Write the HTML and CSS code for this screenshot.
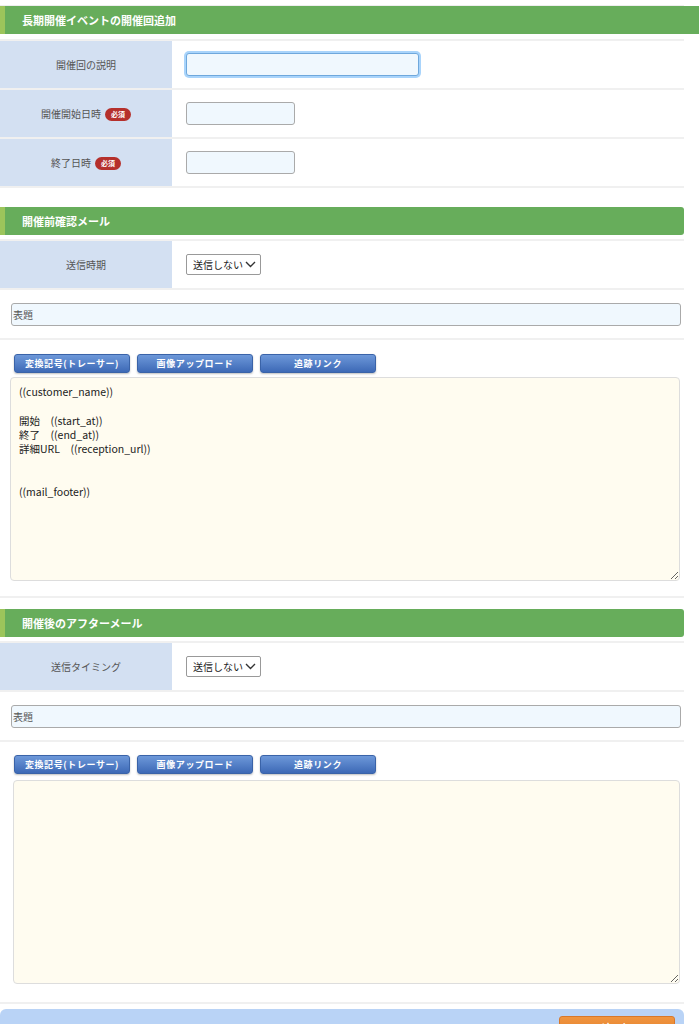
FILE: index.html
```html
<!DOCTYPE html>
<html lang="ja">
<head>
    <meta charset="UTF-8" />
    <meta name="viewport" content="width=device-width, initial-scale=1.0" />
    <title>長期開催イベントの開催回追加</title>
    <link rel="stylesheet" href="styles.css">
</head>
<body>
    <div class="page">
        <section class="block block-first">
            <h2 class="block-title title-wide">長期開催イベントの開催回追加</h2>
            <table class="form-table">
                <tr>
                    <th>開催回の説明</th>
                    <td><input type="text" class="text-input input-long is-focus" /></td>
                </tr>
                <tr>
                    <th>開催開始日時<span class="badge">必須</span></th>
                    <td><input type="text" class="text-input input-short" /></td>
                </tr>
                <tr>
                    <th>終了日時<span class="badge">必須</span></th>
                    <td><input type="text" class="text-input input-short" /></td>
                </tr>
            </table>
        </section>

        <section class="block block-mail">
            <h2 class="block-title">開催前確認メール</h2>
            <table class="form-table">
                <tr>
                    <th>送信時期</th>
                    <td>
                        <label class="select-wrap">
                            <select class="select-box">
                                <option>送信しない</option>
                            </select>
                            <svg class="chevron" width="11" height="7" viewBox="0 0 11 7"><path d="M1 1l4.5 4.5L10 1" fill="none" stroke="#333" stroke-width="1.4" /></svg>
                        </label>
                    </td>
                </tr>
            </table>
            <div class="subject-row">
                <input type="text" class="subject-input" placeholder="表題" />
            </div>
            <div class="body-row">
                <div class="tool-buttons">
                    <button type="button" class="tool-btn">変換記号(トレーサー)</button>
                    <button type="button" class="tool-btn">画像アップロード</button>
                    <button type="button" class="tool-btn">追跡リンク</button>
                </div>
                <textarea class="mail-body">((customer_name))

開始　((start_at))
終了　((end_at))
詳細URL　((reception_url))


((mail_footer))</textarea>
            </div>
        </section>

        <section class="block block-mail block-after">
            <h2 class="block-title">開催後のアフターメール</h2>
            <table class="form-table">
                <tr>
                    <th>送信タイミング</th>
                    <td>
                        <label class="select-wrap">
                            <select class="select-box">
                                <option>送信しない</option>
                            </select>
                            <svg class="chevron" width="11" height="7" viewBox="0 0 11 7"><path d="M1 1l4.5 4.5L10 1" fill="none" stroke="#333" stroke-width="1.4" /></svg>
                        </label>
                    </td>
                </tr>
            </table>
            <div class="subject-row">
                <input type="text" class="subject-input" placeholder="表題" />
            </div>
            <div class="body-row">
                <div class="tool-buttons">
                    <button type="button" class="tool-btn">変換記号(トレーサー)</button>
                    <button type="button" class="tool-btn">画像アップロード</button>
                    <button type="button" class="tool-btn">追跡リンク</button>
                </div>
                <textarea class="mail-body body-indent"></textarea>
            </div>
        </section>

        <div class="submit-bar">
            <button type="submit" class="submit-btn">追　加</button>
        </div>
    </div>
</body>
</html>
```

FILE: styles.css
```css
body {
    margin: 0;
    padding: 0;
    background-color: white;
    font-family: "Noto Sans CJK JP", "Noto Sans", sans-serif;
    font-size: 11px;
    color: #333;
}
.page {
    width: 684px;
    padding-top: 5px;
}
.block-first {
    border-top: 1px solid #eee;
    padding-bottom: 1px;
}
.block-title {
    margin: 0;
    height: 28px;
    line-height: 28px;
    padding-left: 17px;
    background-color: #67ad5b;
    border-left: 5px solid #9cc55b;
    border-radius: 0 3px 3px 0;
    color: white;
    font-size: 11px;
    font-weight: 600;
}
.title-wide {
    margin-right: -15px;
    border-radius: 0;
}
.form-table {
    width: 100%;
    margin-top: 4px;
    border-collapse: collapse;
    border-top: 2px solid #f0f0f0;
}
.block-first .form-table {
    margin-top: 5px;
}
.form-table tr {
    border-bottom: 2px solid #f0f0f0;
}
.form-table th {
    width: 172px;
    height: 47px;
    padding: 0;
    background-color: #d3e0f2;
    color: #555;
    font-size: 10px;
    font-weight: normal;
    text-align: center;
}
.form-table td {
    padding: 0 0 0 14px;
}
.badge {
    display: inline-block;
    margin-left: 4px;
    padding: 0 6px;
    height: 13px;
    line-height: 13px;
    border-radius: 7px;
    background-color: #b5302c;
    color: white;
    font-size: 7px;
    font-weight: bold;
    vertical-align: 1px;
}
.text-input {
    display: block;
    height: 23px;
    box-sizing: border-box;
    background-color: #f0f8fe;
    border: 1px solid #aaa;
    border-radius: 3px;
}
.input-long {
    width: 233px;
}
.input-short {
    width: 109px;
}
.is-focus {
    border-color: #6fa8dc;
    box-shadow: 0 0 0 2px #a9d4fb;
}
.select-wrap {
    position: relative;
    display: inline-block;
}
.select-box {
    display: block;
    width: 75px;
    height: 21px;
    padding: 0 0 0 6px;
    border: 1px solid #999;
    border-radius: 2px;
    background-color: white;
    font-family: inherit;
    font-size: 10px;
    color: #222;
    appearance: none;
    -webkit-appearance: none;
}
.chevron {
    position: absolute;
    right: 5px;
    top: 7px;
    pointer-events: none;
}
.subject-row {
    padding: 13px 3px 12px 11px;
    border-bottom: 2px solid #f0f0f0;
}
.subject-input {
    display: block;
    width: 100%;
    height: 23px;
    box-sizing: border-box;
    padding: 0 0 0 1px;
    background-color: #f0f8fe;
    border: 1px solid #aaa;
    border-radius: 3px;
    font-family: inherit;
    font-size: 10px;
}
.subject-input::placeholder {
    color: #555;
}
.body-row {
    padding: 14px 4px 15px 10px;
    border-bottom: 2px solid #f0f0f0;
}
.tool-buttons {
    display: flex;
    gap: 7px;
    padding-left: 4px;
    margin-bottom: 4px;
}
.tool-btn {
    width: 116px;
    height: 19px;
    padding: 0;
    border: 1px solid #3a63a8;
    border-radius: 3px;
    background: linear-gradient(#6d98d9, #3d69b6);
    box-shadow: 0 1px 2px rgba(0, 0, 0, 0.25);
    color: white;
    font-family: inherit;
    font-size: 9px;
    font-weight: 600;
    letter-spacing: 0.6px;
    cursor: pointer;
}
.mail-body {
    display: block;
    width: 100%;
    height: 204px;
    box-sizing: border-box;
    padding: 7px 8px;
    background-color: #fffcf0;
    border: 1px solid #ddd;
    border-radius: 4px;
    font-family: inherit;
    font-size: 10.5px;
    line-height: 14.3px;
    color: #222;
}
.body-indent {
    margin-left: 3px;
    width: calc(100% - 3px);
}
.block-mail {
    margin-top: 18px;
}
.block-after {
    margin-top: 11px;
}
.block-after .body-row {
    padding-top: 13px;
    padding-bottom: 18px;
}
.block-after .tool-buttons {
    margin-bottom: 6px;
}
.submit-bar {
    margin-top: 5px;
    height: 40px;
    padding: 7px 9px 0 0;
    box-sizing: border-box;
    background-color: #b9d3f6;
    border-radius: 6px 6px 0 0;
    text-align: right;
}
.submit-btn {
    width: 116px;
    height: 24px;
    padding: 0;
    border: 1px solid #d8782a;
    border-radius: 3px;
    background: linear-gradient(#f09540, #e07a25);
    color: white;
    font-family: inherit;
    font-size: 10px;
    font-weight: 600;
    line-height: 12px;
    vertical-align: top;
}
```
